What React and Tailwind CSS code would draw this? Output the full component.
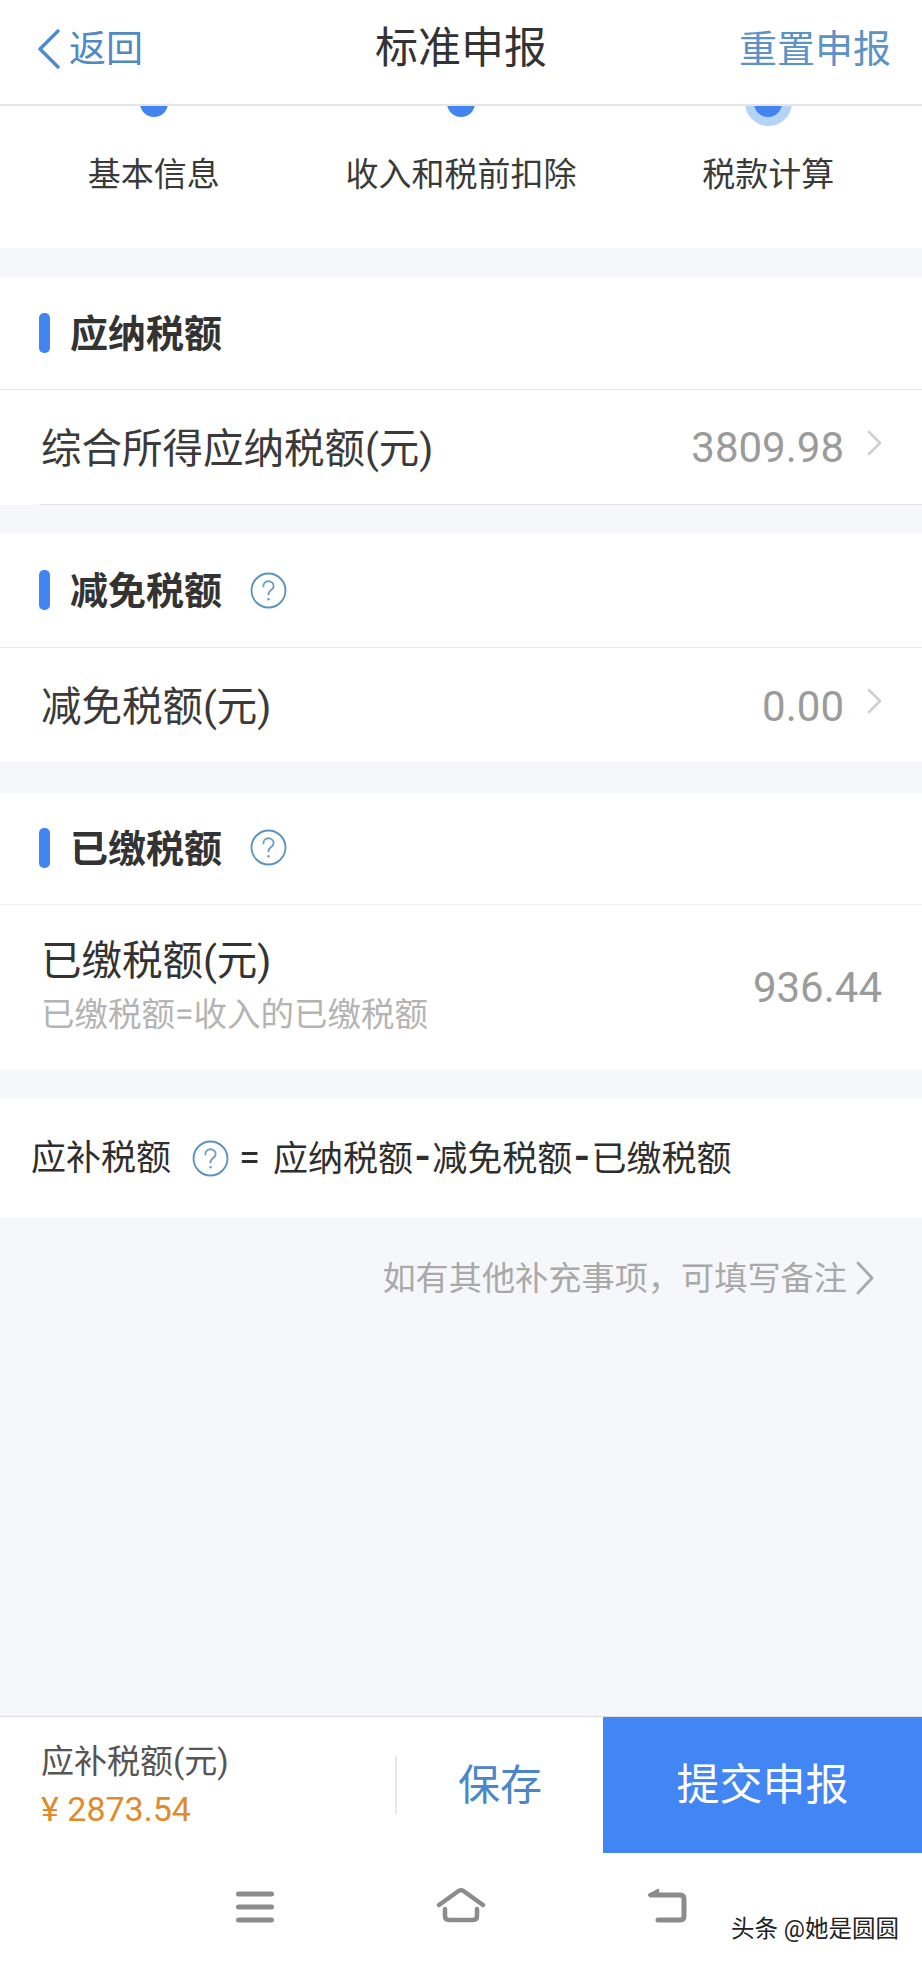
const FONT = "font-['Roboto','Noto_Sans_CJK_SC',sans-serif]";

function HelpIcon({ className = "" }) {
  return (
    <svg width="37" height="37" viewBox="0 0 36 36" fill="none" className={className}>
      <circle cx="18" cy="18" r="16.5" stroke="#5b93c0" strokeWidth="1.8" />
      <path
        d="M13 14c0-3 2.200-5 5-5s5 2 5 4.600c0 2-1.100 3-2.700 4.200-1.500 1.100-2.300 2-2.300 4"
        stroke="#6d9dc2"
        strokeWidth="1.8"
        strokeLinecap="round"
      />
      <circle cx="18" cy="26.500" r="1.200" fill="#6d9dc2" />
    </svg>
  );
}

function Chevron() {
  return (
    <svg width="18" height="26" viewBox="0 0 18 26" fill="none" className="mb-[8px]">
      <path d="M3 2l11 11L3 24" stroke="#cfcfcf" strokeWidth="2.600" strokeLinecap="round" strokeLinejoin="round" />
    </svg>
  );
}

function SectionTitle({ title, help }) {
  return (
    <div className="flex items-center h-full pl-[39px]">
      <span className="w-[11px] h-[40px] rounded-[5px] bg-[#4285f0]" />
      <span className="ml-[20px] pt-[2px] text-[38px] leading-none font-bold text-[#333333]">{title}</span>
      {help && <HelpIcon className="ml-[28px]" />}
    </div>
  );
}

function Step({ label, active }) {
  return (
    <div className="flex flex-col items-center">
      <div className="flex items-center justify-center w-[47px] h-[47px] rounded-full -mt-[27px]">
        <div className={active ? "flex items-center justify-center w-[47px] h-[47px] rounded-full bg-[#b5d2f7]" : ""}>
          <div className="w-[28px] h-[28px] rounded-full bg-[#4285f0]" />
        </div>
      </div>
      <div className="mt-[27px] text-[33px] leading-[44px] text-[#3a3a3a]">{label}</div>
    </div>
  );
}

export default function App() {
  return (
    <div className={`${FONT} flex flex-col w-[922px] h-[1961px] bg-[#f5f7fb] overflow-hidden`}>
      {/* top bar */}
      <div className="relative z-10 flex items-center justify-between shrink-0 h-[106px] pb-[6px] px-[31px] bg-white border-b-2 border-[#e6e6e6]">
        <div className="flex items-center w-[200px] pl-[6px] text-[#5089c6]">
          <svg width="23" height="40" viewBox="0 0 23 40" fill="none">
            <path d="M21 2L3 20l18 18" stroke="#4c8bd0" strokeWidth="3.400" strokeLinecap="round" strokeLinejoin="round" />
          </svg>
          <span className="ml-[9px] text-[37px] leading-none">返回</span>
        </div>
        <div className="pb-[2px] text-[43px] leading-none text-[#333333]">标准申报</div>
        <div className="w-[200px] text-right text-[38px] leading-none text-[#5b93c7]">重置申报</div>
      </div>

      {/* steps, scrolled partly under the top bar */}
      <div className="grid grid-cols-3 shrink-0 h-[142px] bg-white">
        <Step label="基本信息" />
        <Step label="收入和税前扣除" />
        <Step label="税款计算" active />
      </div>

      <div className="mt-[29px] bg-white shrink-0">
        <div className="h-[113px] border-b border-[#e8e8e8]">
          <SectionTitle title="应纳税额" />
        </div>
        <div className="ml-[39px] flex items-center justify-between h-[115px] pl-[2px] pr-[38px] border-b border-[#e6e6e6]">
          <span className="pt-[5px] text-[40.500px] leading-none text-[#3a3a3a]">综合所得应纳税额(元)</span>
          <span className="flex items-center gap-[22px] text-[42px] leading-none text-[#9b9b9b]">
            <span className="pt-[2px]">3809.98</span>
            <Chevron />
          </span>
        </div>
      </div>

      <div className="mt-[28px] bg-white shrink-0">
        <div className="h-[115px] border-b border-[#e8e8e8]">
          <SectionTitle title="减免税额" help />
        </div>
        <div className="flex items-center justify-between h-[114px] pl-[41px] pr-[38px]">
          <span className="pt-[4px] text-[40.500px] leading-none text-[#3a3a3a]">减免税额(元)</span>
          <span className="flex items-center gap-[22px] text-[42px] leading-none text-[#9b9b9b]">
            <span className="pt-[3px]">0.00</span>
            <Chevron />
          </span>
        </div>
      </div>

      <div className="mt-[31px] bg-white shrink-0">
        <div className="h-[112px] pb-[2px] border-b border-[#f3f3f3]">
          <SectionTitle title="已缴税额" help />
        </div>
        <div className="flex items-center justify-between h-[165px] pl-[41px] pr-[40px]">
          <div className="flex flex-col pb-[4px]">
            <span className="text-[40.500px] leading-[50px] text-[#333333]">已缴税额(元)</span>
            <span className="mt-[8px] text-[33.500px] leading-[42px] text-[#b4b4b4]">已缴税额=收入的已缴税额</span>
          </div>
          <span className="text-[42px] leading-none text-[#9b9b9b]">936.44</span>
        </div>
      </div>

      <div className="flex items-center mt-[28px] h-[120px] pl-[31px] bg-white shrink-0 text-[35px] leading-none text-[#2e2e2e]">
        <span>应补税额</span>
        <HelpIcon className="ml-[21px]" />
        <span className="ml-[10px] text-[38px]">=</span>
        <span className="ml-[13px] pb-[5px]">
          应纳税额<span className="mx-[2px] text-[45px] font-medium">-</span>减免税额<span className="mx-[2px] text-[45px] font-medium">-</span>已缴税额
        </span>
      </div>

      <div className="flex-1">
        <div className="flex items-center justify-end h-[120px] pr-[47px] text-[33.200px] leading-none text-[#a9a9a9]">
          <span className="pt-[2px]">如有其他补充事项，可填写备注</span>
          <svg width="20" height="34" viewBox="0 0 20 34" fill="none" className="ml-[8px]">
            <path d="M3 2l14 15L3 32" stroke="#a9a9a9" strokeWidth="2.800" strokeLinecap="round" strokeLinejoin="round" />
          </svg>
        </div>
      </div>

      {/* bottom action bar */}
      <div className="flex shrink-0 h-[137px] bg-white border-t border-[#dedede]">
        <div className="flex flex-col w-[395px] pt-[23px] pl-[41px]">
          <span className="text-[33px] leading-[44px] text-[#555555]">应补税额(元)</span>
          <span className="mt-[3px] text-[34px] leading-[44px] text-[#e08a2c]">¥ 2873.54</span>
        </div>
        <div className="self-center w-[2px] h-[58px] bg-[#e8e8e8]" />
        <div className="flex items-center justify-center w-[206px] pt-[2px] text-[42px] leading-none text-[#4a86c8]">保存</div>
        <div className="flex items-center justify-center flex-1 bg-[#4285f4] text-[43px] leading-none text-white">提交申报</div>
      </div>

      {/* system nav */}
      <div className="relative flex justify-center shrink-0 h-[108px] pt-[34px] bg-white">
        <div className="flex justify-center w-[206px]">
          <svg width="40" height="37" viewBox="0 0 40 37" fill="none">
            <path d="M3.500 7h33M3.500 20h33M3.500 33h33" stroke="#8c8c8c" strokeWidth="5" strokeLinecap="round" />
          </svg>
        </div>
        <div className="flex justify-center w-[206px]">
          <svg width="50" height="37" viewBox="0 0 50 37" fill="none">
            <path d="M3 18L22.500 4c1.500-1 3.500-1 5 0L47 18" stroke="#8c8c8c" strokeWidth="4.500" strokeLinecap="round" strokeLinejoin="round" />
            <path d="M9 22v7c0 2.500 1.500 4 4 4h24c2.500 0 4-1.500 4-4v-7" stroke="#8c8c8c" strokeWidth="4.500" strokeLinecap="round" />
          </svg>
        </div>
        <div className="flex justify-center w-[206px]">
          <svg width="42" height="37" viewBox="0 0 42 37" fill="none">
            <path d="M5 8h29c2.500 0 4 1.500 4 4v17c0 2.500-1.500 4-4 4H12" stroke="#8c8c8c" strokeWidth="5" strokeLinecap="round" />
            <path d="M3 8l9-5v5z" fill="#8c8c8c" stroke="#8c8c8c" strokeWidth="2.500" strokeLinejoin="round" />
          </svg>
        </div>
        <span className="absolute left-[731px] top-[61px] text-[23.500px] leading-[30px] text-[#222222]">头条 @她是圆圆</span>
      </div>
    </div>
  );
}
